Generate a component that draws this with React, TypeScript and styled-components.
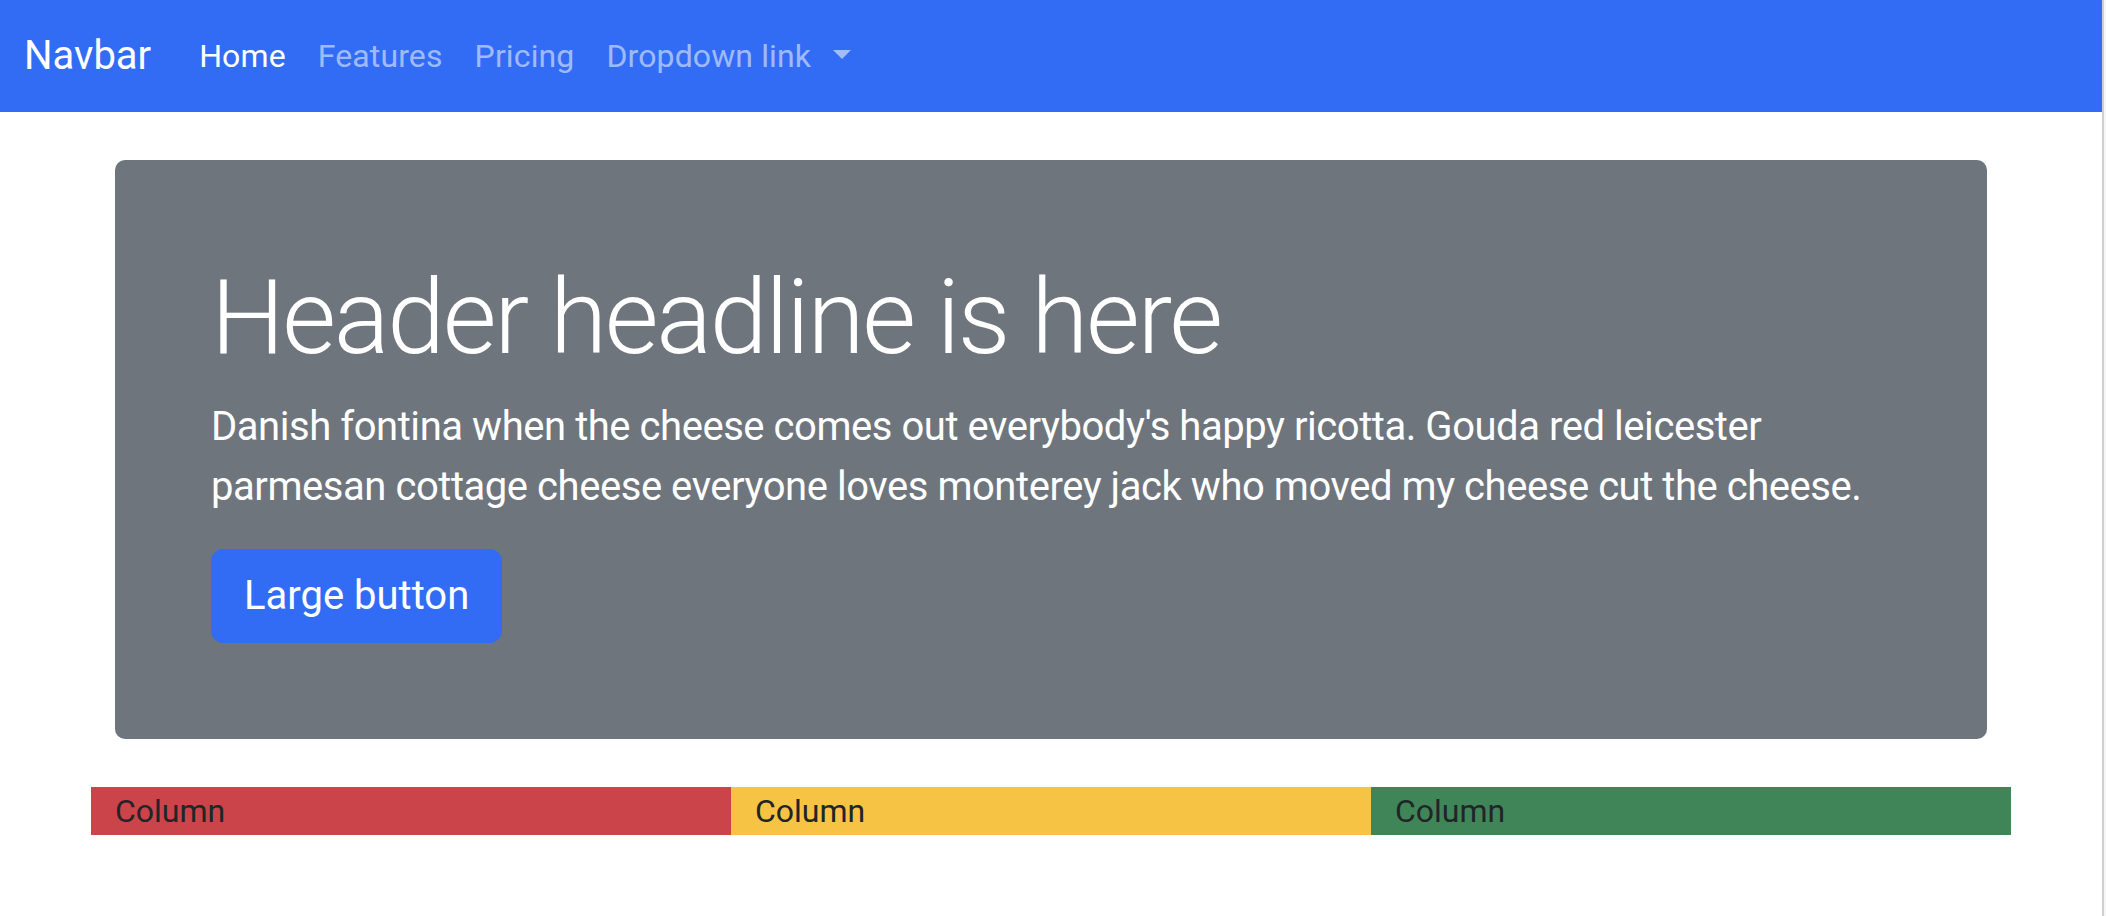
import React from "react";
import styled, { createGlobalStyle } from "styled-components";

const GlobalStyle = createGlobalStyle`
  *, *::before, *::after { box-sizing: border-box; }
  html, body { margin: 0; padding: 0; background: #ffffff; }
  body {
    font-family: Roboto, "Noto Sans", "Liberation Sans", sans-serif;
    color: #212529;
    -webkit-font-smoothing: antialiased;
  }
`;

const Shell = styled.div`
  display: flex;
  min-height: 916px;
`;

const Page = styled.div`
  flex: 1;
  min-width: 0;
`;

const Edge = styled.div`
  width: 4px;
  border-left: 2px solid #cfcfd4;
  background: #f6f6f7;
`;

const Navbar = styled.nav`
  display: flex;
  align-items: center;
  height: 112px;
  padding: 0 24px;
  background: #326cf4;
`;

const Brand = styled.a`
  font-size: 40px;
  line-height: 60px;
  padding: 10px 0;
  margin-right: 32px;
  color: #ffffff;
  text-decoration: none;
`;

const NavList = styled.ul`
  display: flex;
  align-items: center;
  list-style: none;
  margin: 0;
  padding: 0;
`;

const NavLink = styled.a<{ $active?: boolean }>`
  display: flex;
  align-items: center;
  padding: 16px;
  font-size: 32px;
  line-height: 48px;
  letter-spacing: 0.12px;
  text-decoration: none;
  color: ${(p) => (p.$active ? "#ffffff" : "rgba(255, 255, 255, 0.55)")};
`;

const Caret = styled.span`
  display: inline-block;
  width: 0;
  height: 0;
  margin-left: 22px;
  margin-top: -4px;
  border-top: 9px solid currentColor;
  border-left: 9.5px solid transparent;
  border-right: 9.5px solid transparent;
`;

const Container = styled.main`
  max-width: 1920px;
  margin: 0 auto;
  padding: 0 24px;
`;

const Hero = styled.section`
  margin: 48px 0;
  padding: 96px;
  background: #6e757d;
  border-radius: 10px;
  color: #ffffff;
`;

const Headline = styled.h1`
  margin: 0 0 16px;
  font-size: 104px;
  font-weight: 300;
  line-height: 1.2;
  letter-spacing: -2.3px;
`;

const Lead = styled.p`
  margin: 0 0 32px;
  font-size: 40px;
  line-height: 60px;
  font-weight: 400;
  letter-spacing: -0.45px;
`;

const PrimaryButton = styled.button`
  padding: 16px 32px;
  font-family: inherit;
  font-size: 40px;
  line-height: 60px;
  color: #ffffff;
  background: #326cf4;
  border: 1px solid #326cf4;
  border-radius: 12px;
  cursor: pointer;
`;

const Row = styled.div`
  display: grid;
  grid-template-columns: repeat(3, 1fr);
  margin: 0 -24px;
`;

const Column = styled.div<{ $bg: string }>`
  padding: 0 24px;
  font-size: 32px;
  line-height: 48px;
  color: #212529;
  background: ${(p) => p.$bg};
`;

const columns = ["#cb444a", "#f6c344", "#408558"];

export default function App() {
  return (
    <>
      <GlobalStyle />
      <Shell>
        <Page>
          <Navbar>
            <Brand href="#">Navbar</Brand>
            <NavList>
              <li>
                <NavLink href="#" $active>
                  Home
                </NavLink>
              </li>
              <li>
                <NavLink href="#">Features</NavLink>
              </li>
              <li>
                <NavLink href="#">Pricing</NavLink>
              </li>
              <li>
                <NavLink href="#">
                  Dropdown link
                  <Caret />
                </NavLink>
              </li>
            </NavList>
          </Navbar>
          <Container>
            <Hero>
              <Headline>Header headline is here</Headline>
              <Lead>
                Danish fontina when the cheese comes out everybody's happy ricotta. Gouda red leicester
                parmesan cottage cheese everyone loves monterey jack who moved my cheese cut the cheese.
              </Lead>
              <PrimaryButton type="button">Large button</PrimaryButton>
            </Hero>
            <Row>
              {columns.map((c, i) => (
                <Column key={i} $bg={c}>
                  Column
                </Column>
              ))}
            </Row>
          </Container>
        </Page>
        <Edge />
      </Shell>
    </>
  );
}
